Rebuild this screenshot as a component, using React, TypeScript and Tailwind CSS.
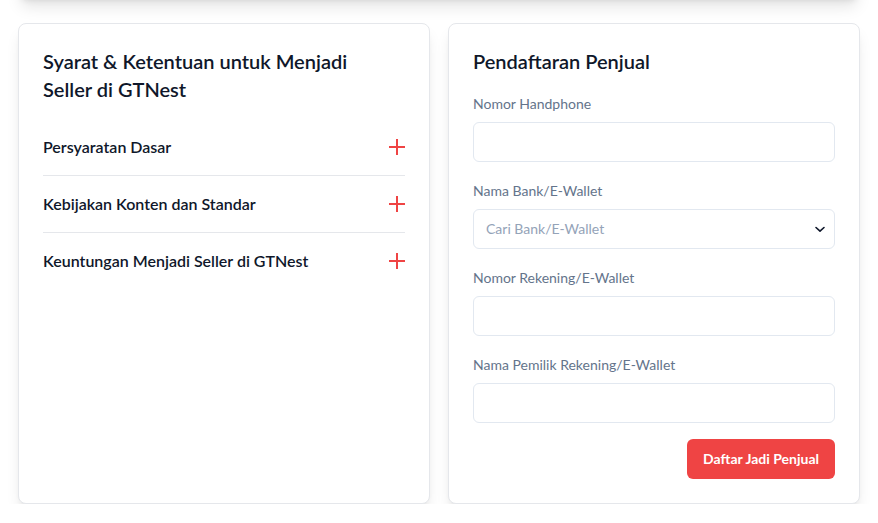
const sections = [
  "Persyaratan Dasar",
  "Kebijakan Konten dan Standar",
  "Keuntungan Menjadi Seller di GTNest",
];

const fields = [
  { label: "Nomor Handphone", type: "input" },
  { label: "Nama Bank/E-Wallet", type: "select" },
  { label: "Nomor Rekening/E-Wallet", type: "input" },
  { label: "Nama Pemilik Rekening/E-Wallet", type: "input" },
];

function PlusIcon() {
  return (
    <svg width="16" height="16" viewBox="0 0 16 16" fill="none" stroke="#ef4444" strokeWidth={2}>
      <path d="M8 0v16M0 8h16" />
    </svg>
  );
}

function ChevronDown() {
  return (
    <svg width="12" height="8" viewBox="0 0 12 8" fill="none" stroke="#0f172a" strokeWidth={1.6} strokeLinecap="round" strokeLinejoin="round">
      <path d="M2 2.5 6 6.2l4-3.7" />
    </svg>
  );
}

export default function App() {
  return (
    <div className="min-h-screen bg-white px-[18px] font-['Lato',sans-serif] text-[#0f172a]">
      <div className="-mt-[40px] h-[40px] rounded-lg bg-white shadow-lg" />

      <div className="mt-[23px] grid grid-cols-2 gap-[18px]">
        <div className="rounded-lg border border-gray-200 bg-white px-6 pt-[23px] pb-6 shadow-lg">
          <h2 className="mb-4 pr-3 text-xl leading-7 font-semibold">
            Syarat &amp; Ketentuan untuk Menjadi Seller di GTNest
          </h2>
          <div>
            {sections.map((s, i) => (
              <div
                key={s}
                className={`flex items-center justify-between py-4 ${i < sections.length - 1 ? "border-b border-[#e5e7eb]" : ""}`}
              >
                <span className="text-base leading-6 font-semibold">{s}</span>
                <PlusIcon />
              </div>
            ))}
          </div>
        </div>

        <div className="rounded-lg border border-gray-200 bg-white px-6 pt-[23px] pb-6 shadow-lg">
          <h2 className="mb-[19px] text-xl leading-7 font-semibold">Pendaftaran Penjual</h2>
          <div className="flex flex-col gap-[19px]">
            {fields.map((f) => (
              <div key={f.label}>
                <label className="mb-2 block text-sm leading-5 text-[#64748b]">{f.label}</label>
                {f.type === "select" ? (
                  <div className="flex h-10 items-center justify-between rounded-md border border-[#e2e8f0] pr-2 pl-3">
                    <span className="text-sm text-[#94a3b8]">Cari Bank/E-Wallet</span>
                    <ChevronDown />
                  </div>
                ) : (
                  <input className="block h-10 w-full rounded-md border border-[#e2e8f0] px-3 text-sm outline-none" />
                )}
              </div>
            ))}
          </div>
          <div className="mt-4 flex justify-end">
            <button className="h-10 rounded-md bg-[#ef4444] px-4 text-sm font-bold text-white">
              Daftar Jadi Penjual
            </button>
          </div>
        </div>
      </div>
    </div>
  );
}
